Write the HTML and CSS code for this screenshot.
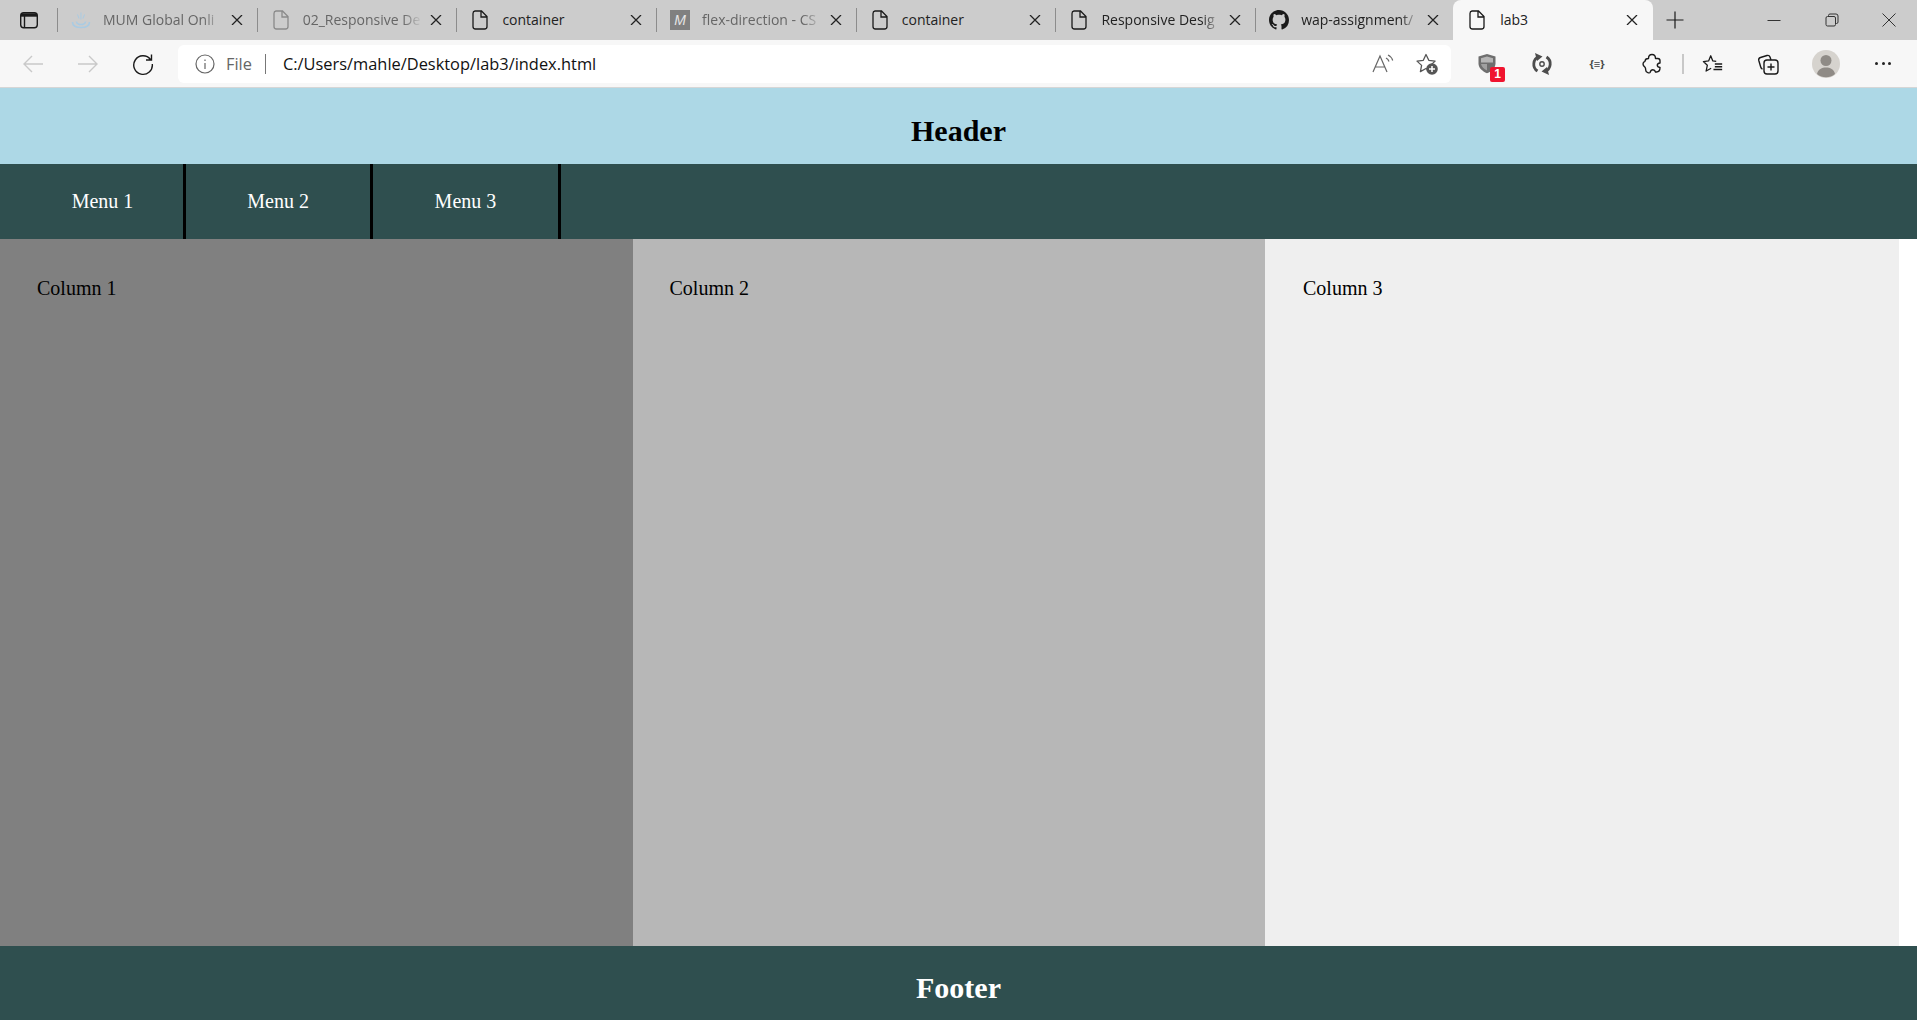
FILE: index.html
```html
<!DOCTYPE html>
<html lang="en">
<head>
    <meta charset="UTF-8">
    <meta name="viewport" content="width=device-width, initial-scale=1.0">
    <title>lab3</title>
    <link rel="stylesheet" href="styles.css">
</head>
<body>
    <!-- browser chrome -->
    <div class="tabstrip">
        <div class="tab-toggle">
            <svg width="20" height="20" viewBox="0 0 20 20" fill="none" stroke="#1a1a1a" stroke-width="1.4"><rect x="1.700" y="2.700" width="16.600" height="15" rx="3"/><path d="M2 5h16" stroke-width="3.400"/><path d="M5.500 6v11"/></svg>
        </div>
        <div class="sep"></div>
        <div class="tab">
            <svg class="fav" width="20" height="20" viewBox="0 0 20 20" fill="none" stroke="#a9cbe3" stroke-width="1.600"><path d="M1.500 12c0 3.500 3.500 5.500 8.500 5.500s8.500-2 8.500-5.500M5.500 11.500c0 2 2.500 3 4.500 3s4.500-1 4.500-3" /><path d="M10 2.500v7M6.500 4.500l1.500 4M13.500 4.500l-1.500 4" stroke-width="1"/></svg>
            <span class="tab-title muted fade">MUM Global Onli</span>
            <svg class="x" width="20" height="10" viewBox="0 0 20 10" stroke="#222" stroke-width="1.300"><path d="M5 0l10 10M15 0L5 10"/></svg>
        </div>
        <div class="sep"></div>
        <div class="tab">
            <svg class="fav" width="20" height="20" viewBox="0 0 20 20" fill="none" stroke="#8a8a8a" stroke-width="1.300"><path d="M5 1h6.500L17 6.500V16.500a2.500 2.500 0 0 1-2.500 2.500h-9A2.500 2.500 0 0 1 3 16.500v-13A2.500 2.500 0 0 1 5 1zM11 1.500v5.500h5.500"/></svg>
            <span class="tab-title muted fade">02_Responsive De</span>
            <svg class="x" width="20" height="10" viewBox="0 0 20 10" stroke="#222" stroke-width="1.300"><path d="M5 0l10 10M15 0L5 10"/></svg>
        </div>
        <div class="sep"></div>
        <div class="tab">
            <svg class="fav" width="20" height="20" viewBox="0 0 20 20" fill="none" stroke="#1a1a1a" stroke-width="1.300"><path d="M5 1h6.500L17 6.500V16.500a2.500 2.500 0 0 1-2.500 2.500h-9A2.500 2.500 0 0 1 3 16.500v-13A2.500 2.500 0 0 1 5 1zM11 1.500v5.500h5.500"/></svg>
            <span class="tab-title">container</span>
            <svg class="x" width="20" height="10" viewBox="0 0 20 10" stroke="#222" stroke-width="1.300"><path d="M5 0l10 10M15 0L5 10"/></svg>
        </div>
        <div class="sep"></div>
        <div class="tab">
            <svg class="fav" width="20" height="20" viewBox="0 0 20 20"><rect width="20" height="20" fill="#808080"/><text x="10" y="15" font-family="Liberation Sans" font-style="italic" font-size="14" fill="#e6e6e6" text-anchor="middle">M</text></svg>
            <span class="tab-title muted fade">flex-direction - CS</span>
            <svg class="x" width="20" height="10" viewBox="0 0 20 10" stroke="#222" stroke-width="1.300"><path d="M5 0l10 10M15 0L5 10"/></svg>
        </div>
        <div class="sep"></div>
        <div class="tab">
            <svg class="fav" width="20" height="20" viewBox="0 0 20 20" fill="none" stroke="#1a1a1a" stroke-width="1.300"><path d="M5 1h6.500L17 6.500V16.500a2.500 2.500 0 0 1-2.500 2.500h-9A2.500 2.500 0 0 1 3 16.500v-13A2.500 2.500 0 0 1 5 1zM11 1.500v5.500h5.500"/></svg>
            <span class="tab-title">container</span>
            <svg class="x" width="20" height="10" viewBox="0 0 20 10" stroke="#222" stroke-width="1.300"><path d="M5 0l10 10M15 0L5 10"/></svg>
        </div>
        <div class="sep"></div>
        <div class="tab">
            <svg class="fav" width="20" height="20" viewBox="0 0 20 20" fill="none" stroke="#1a1a1a" stroke-width="1.300"><path d="M5 1h6.500L17 6.500V16.500a2.500 2.500 0 0 1-2.500 2.500h-9A2.500 2.500 0 0 1 3 16.500v-13A2.500 2.500 0 0 1 5 1zM11 1.500v5.500h5.500"/></svg>
            <span class="tab-title fade">Responsive Desig</span>
            <svg class="x" width="20" height="10" viewBox="0 0 20 10" stroke="#222" stroke-width="1.300"><path d="M5 0l10 10M15 0L5 10"/></svg>
        </div>
        <div class="sep"></div>
        <div class="tab tab-last">
            <svg class="fav" width="20" height="20" viewBox="0 0 16 16" fill="#1a1a1a"><path d="M8 0C3.580 0 0 3.580 0 8c0 3.540 2.290 6.530 5.470 7.590.4.070.55-.17.55-.38 0-.19-.01-.82-.01-1.490-2.010.37-2.530-.49-2.690-.94-.09-.23-.48-.94-.82-1.130-.28-.15-.68-.52-.01-.53.63-.01 1.080.58 1.230.82.720 1.210 1.870.87 2.330.66.070-.52.280-.87.510-1.070-1.780-.2-3.640-.89-3.640-3.950 0-.87.310-1.590.820-2.150-.08-.2-.36-1.020.08-2.120 0 0 .670-.21 2.200.820.640-.18 1.320-.27 2-.27s1.360.09 2 .27c1.530-1.040 2.200-.82 2.200-.82.440 1.100.160 1.920.080 2.120.510.560.820 1.270.820 2.150 0 3.070-1.870 3.750-3.650 3.950.290.250.540.730.540 1.480 0 1.070-.01 1.930-.01 2.200 0 .210.150.460.550.380A8.010 8.010 0 0 0 16 8c0-4.420-3.580-8-8-8z"/></svg>
            <span class="tab-title fade">wap-assignment/</span>
            <svg class="x" width="20" height="10" viewBox="0 0 20 10" stroke="#222" stroke-width="1.300"><path d="M5 0l10 10M15 0L5 10"/></svg>
        </div>
        <div class="tab tab-active">
            <svg class="fav" width="20" height="20" viewBox="0 0 20 20" fill="none" stroke="#1a1a1a" stroke-width="1.300"><path d="M5 1h6.500L17 6.500V16.500a2.500 2.500 0 0 1-2.500 2.500h-9A2.500 2.500 0 0 1 3 16.500v-13A2.500 2.500 0 0 1 5 1zM11 1.500v5.500h5.500"/></svg>
            <span class="tab-title">lab3</span>
            <svg class="x" width="20" height="10" viewBox="0 0 20 10" stroke="#222" stroke-width="1.300"><path d="M5 0l10 10M15 0L5 10"/></svg>
        </div>
        <div class="new-tab">
            <svg width="20" height="20" viewBox="0 0 20 20" stroke="#1a1a1a" stroke-width="1.200"><path d="M10 1.500v17M1.500 10h17"/></svg>
        </div>
        <div class="win-btns">
            <svg width="14" height="14" viewBox="0 0 14 14" stroke="#333" fill="none"><path d="M0.500 7.500h13"/></svg>
            <svg width="14" height="14" viewBox="0 0 14 14" stroke="#333" fill="none"><rect x="1" y="3.500" width="9.500" height="9.500" rx="1.500"/><path d="M3.500 3.500V2.500A1.500 1.500 0 0 1 5 1h6a2 2 0 0 1 2 2v6a1.500 1.500 0 0 1-1.500 1.500h-1"/></svg>
            <svg width="14" height="14" viewBox="0 0 14 14" stroke="#333" fill="none"><path d="M0.500 0.500l13 13M13.500 0.500l-13 13"/></svg>
        </div>
    </div>

    <div class="toolbar">
        <div class="nav-btns">
            <svg width="24" height="24" viewBox="0 0 24 24" fill="none" stroke="#c9c9c9" stroke-width="1.400"><path d="M22 12H3M11 4l-8 8 8 8"/></svg>
            <svg width="24" height="24" viewBox="0 0 24 24" fill="none" stroke="#c9c9c9" stroke-width="1.400"><path d="M2 12h19M13 4l8 8-8 8"/></svg>
            <svg width="24" height="24" viewBox="0 0 24 24" fill="none" stroke="#1a1a1a" stroke-width="1.400"><path d="M19.500 7.500A9.300 9.300 0 1 0 21.300 12M20.500 2.500v5.500H15"/></svg>
        </div>
        <div class="addressbar">
            <svg width="20" height="20" viewBox="0 0 20 20" fill="none" stroke="#666" stroke-width="1.200"><circle cx="10" cy="10" r="9"/><path d="M10 9v6M10 5.500v1.500"/></svg>
            <span class="file-label">File</span>
            <span class="addr-sep"></span>
            <span class="url">C:/Users/mahle/Desktop/lab3/index.html</span>
            <svg class="addr-read" width="24" height="22" viewBox="0 0 24 22" fill="none" stroke="#666" stroke-width="1.200"><path d="M2 19L9 3l7 16M4.500 14h9M15 5c1.500.8 2.500 2 3 3.500M17 2c2.500 1.200 4 3 4.700 5.500"/></svg>
            <svg width="24" height="24" viewBox="0 0 24 24" fill="none" stroke="#555" stroke-width="1.300" stroke-linejoin="round"><path d="M11 2.500l2.800 5.800 6.300.8-4.600 4.300 1.200 6.200-5.700-3.100-5.600 3.100 1.200-6.200L2 9.100l6.300-.8z"/><circle cx="17" cy="17" r="5.800" fill="#555" stroke="none"/><path d="M17 14v6M14 17h6" stroke="#fff" stroke-width="1.500"/></svg>
        </div>
        <div class="tools">
            <div class="tool shield">
                <svg width="18" height="21" viewBox="0 0 18 20"><path d="M9 .5l8.500 2.500V10c0 4.500-3.500 7.500-8.500 9.800C4 17.500.5 14.500.5 10V3z" fill="#6e6e6e"/><path d="M9 3l6 1.700V9H3V4.700z" fill="#b5b5b5"/><path d="M3 10.500h6V17c-3-1.500-5.500-3.500-6-6.500z" fill="#a0a0a0"/></svg>
                <span class="badge">1</span>
            </div>
            <div class="tool">
                <svg width="22" height="22" viewBox="0 0 22 22" fill="none" stroke="#4d4d4d" stroke-width="2.800"><path d="M8 3.500A8.200 8.200 0 0 0 6.500 18M14 18.500A8.200 8.200 0 0 0 15.500 4"/><path d="M4 0l7.500 3.500L6 8zM18 22l-7.500-3.500L16 14z" fill="#4d4d4d" stroke="none"/><circle cx="11" cy="11" r="2.200" stroke-width="1.400"/></svg>
            </div>
            <div class="tool braces">{≡}</div>
            <div class="tool">
                <svg width="22" height="22" viewBox="0 0 22 22" fill="none" stroke="#1a1a1a" stroke-width="1.400" stroke-linejoin="round"><path d="M7.500 5.500C7.500 3 9 1.500 11 1.500s3.500 1.500 3.500 4h2.300c1.300 0 2.200.9 2.200 2.200V10c-1.800.2-2.700 1-2.700 2.200s1 2 2.700 2.300c0 2.800-1 4.500-3.500 4.500h-1c-.4-1.500-1.300-2.300-2.600-2.300s-2.300.9-2.700 2.500c-.4 1-4.500.8-4.500-2.200 0-1.200-.2-2-.7-2.800C2.500 13 2 12 2 11s.8-2.200 2-2.700c.1-1.800 1.500-2.800 3.500-2.800z"/></svg>
            </div>
            <div class="tool-sep"></div>
            <div class="tool">
                <svg width="24" height="22" viewBox="0 0 24 22" fill="none" stroke="#1a1a1a" stroke-width="1.400" stroke-linejoin="round"><path d="M15.500 8.200l-3.700-.5L9.500 2 7.200 7.700l-5.700.6 4.300 4.100-1.300 6.300 5.500-3"/><path d="M14 11h8M14 14h8M12.500 17h9.500"/></svg>
            </div>
            <div class="tool">
                <svg width="22" height="22" viewBox="0 0 22 22" fill="none" stroke="#1a1a1a" stroke-width="1.400"><path d="M5.500 16C4.500 15.800 4 15 3.700 14L1.800 7.500a2.500 2.500 0 0 1 1.700-3L10 2.500a2.500 2.500 0 0 1 3 1.500L14 7"/><rect x="7" y="7" width="14" height="14" rx="3"/><path d="M14 10.500v7M10.500 14h7"/></svg>
            </div>
            <div class="avatar">
                <svg width="28" height="28" viewBox="0 0 28 28"><circle cx="14" cy="14" r="14" fill="#d6d3ce"/><circle cx="14" cy="10.500" r="5.500" fill="#8f8b86"/><path d="M5 24c1-5 5-6.500 9-6.500s8 1.500 9 6.500a14 14 0 0 1-18 0z" fill="#8f8b86"/></svg>
            </div>
            <div class="more"><span></span><span></span><span></span></div>
        </div>
    </div>

    <!-- the page itself -->
    <header class="page-header">Header</header>
    <nav class="menu">
        <a class="menu-item first">Menu 1</a>
        <a class="menu-item">Menu 2</a>
        <a class="menu-item">Menu 3</a>
    </nav>
    <main class="columns">
        <div class="col col-1">Column 1</div>
        <div class="col col-2">Column 2</div>
        <div class="col col-3">Column 3</div>
    </main>
    <footer class="page-footer">Footer</footer>
</body>
</html>
```

FILE: styles.css
```css
* {
    box-sizing: border-box;
}
html, body {
    height: 100%;
}
body {
    margin: 0;
    background-color: #fff;
    font-family: "Liberation Serif", "Times New Roman", serif;
    overflow: hidden;
}

/* tab strip */
.tabstrip {
    display: flex;
    align-items: center;
    height: 40px;
    background-color: #ccc;
    font-family: "Open Sans", "Noto Sans", sans-serif;
    font-size: 14px;
    color: #222;
}
.tab-toggle {
    width: 57px;
    display: flex;
    justify-content: center;
    flex: none;
}
.sep {
    width: 1px;
    height: 24px;
    background-color: #8c8c8c;
    flex: none;
}
.tab {
    display: flex;
    align-items: center;
    height: 40px;
    padding: 0 10px 0 13px;
    flex: none;
    width: 198.7px;
}
.tab-last {
    width: 197px;
}
.tab-active {
    width: 200px;
    background-color: #f7f7f7;
    border-radius: 8px 8px 0 0;
    padding: 0 11px 0 14px;
}
.fav {
    flex: none;
    margin-right: 12px;
}
.tab-active .fav {
    margin-right: 13px;
}
.tab-title {
    flex: 1;
    min-width: 0;
    padding-bottom: 2px;
    overflow: hidden;
    white-space: nowrap;
}
.tab-title.muted {
    color: #666;
}
.tab-title.fade {
    -webkit-mask-image: linear-gradient(to right, #000 84%, transparent 100%);
    mask-image: linear-gradient(to right, #000 84%, transparent 100%);
}
.x {
    flex: none;
    margin-left: 4px;
}
.new-tab {
    width: 44px;
    display: flex;
    justify-content: center;
    flex: none;
}
.win-btns {
    margin-left: auto;
    display: flex;
    gap: 43.5px;
    padding-right: 21px;
}

/* toolbar */
.toolbar {
    display: flex;
    align-items: center;
    height: 48px;
    background-color: #f7f7f7;
    border-bottom: 1px solid #d6d6d6;
    font-family: "Open Sans", "Noto Sans", sans-serif;
}
.nav-btns {
    width: 178px;
    padding-left: 21px;
    display: flex;
    gap: 31px;
    flex: none;
}
.addressbar {
    display: flex;
    align-items: center;
    width: 1273px;
    height: 38px;
    background-color: #fff;
    border-radius: 6px;
    padding: 0 12px 0 17px;
    flex: none;
    font-size: 16.4px;
}
.file-label {
    margin-left: 11px;
    color: #666;
}
.addr-sep {
    width: 1px;
    height: 20px;
    background-color: #777;
    margin: 0 17px 0 13px;
}
.url {
    color: #111;
    flex: 1;
}
.addr-read {
    margin-right: 20px;
}
.tools {
    display: flex;
    align-items: center;
    flex: 1;
    padding-left: 25px;
    gap: 33px;
}
.tool {
    position: relative;
    display: flex;
    width: 22px;
    justify-content: center;
    flex: none;
}
.badge {
    position: absolute;
    right: -7px;
    bottom: -8px;
    width: 15px;
    height: 15px;
    background-color: #f0142f;
    border-radius: 2px;
    color: #fff;
    font-family: "Liberation Sans", sans-serif;
    font-weight: bold;
    font-size: 12px;
    line-height: 15px;
    text-align: center;
}
.braces {
    font-size: 11px;
    font-weight: bold;
    color: #444;
    white-space: nowrap;
}
.tool-sep {
    width: 2px;
    height: 20px;
    background-color: #c8c8c8;
    margin: 0 -15px 0 -14px;
    flex: none;
}
.avatar {
    display: flex;
    flex: none;
}
.more {
    display: flex;
    gap: 3.5px;
    margin-left: 2px;
}
.more span {
    width: 3px;
    height: 3px;
    border-radius: 50%;
    background-color: #222;
}

/* page */
.page-header, .page-footer {
    font-size: 30px;
    font-weight: bold;
    text-align: center;
    display: flex;
    align-items: center;
    justify-content: center;
    padding-top: 9px;
}
.page-header {
    height: 76px;
    background-color: lightblue;
    color: #000;
}
.menu {
    display: flex;
    height: 75px;
    background-color: darkslategray;
}
.menu-item {
    display: flex;
    align-items: center;
    justify-content: center;
    width: 187.3px;
    color: #fff;
    font-size: 20px;
    border-right: 3px solid #000;
}
.menu-item.first {
    width: 186px;
    padding-left: 22px;
}
.columns {
    display: flex;
    height: 707px;
    width: 1899px;
}
.col {
    width: 632.5px;
    padding: 38px 37px;
    font-size: 20px;
    color: #000;
}
.col-1 { background-color: gray; }
.col-2 { background-color: #b7b7b7; }
.col-3 { background-color: #efefef; flex: 1; padding-left: 38px; }
.page-footer {
    height: 74px;
    background-color: darkslategray;
    color: #fff;
}
```
